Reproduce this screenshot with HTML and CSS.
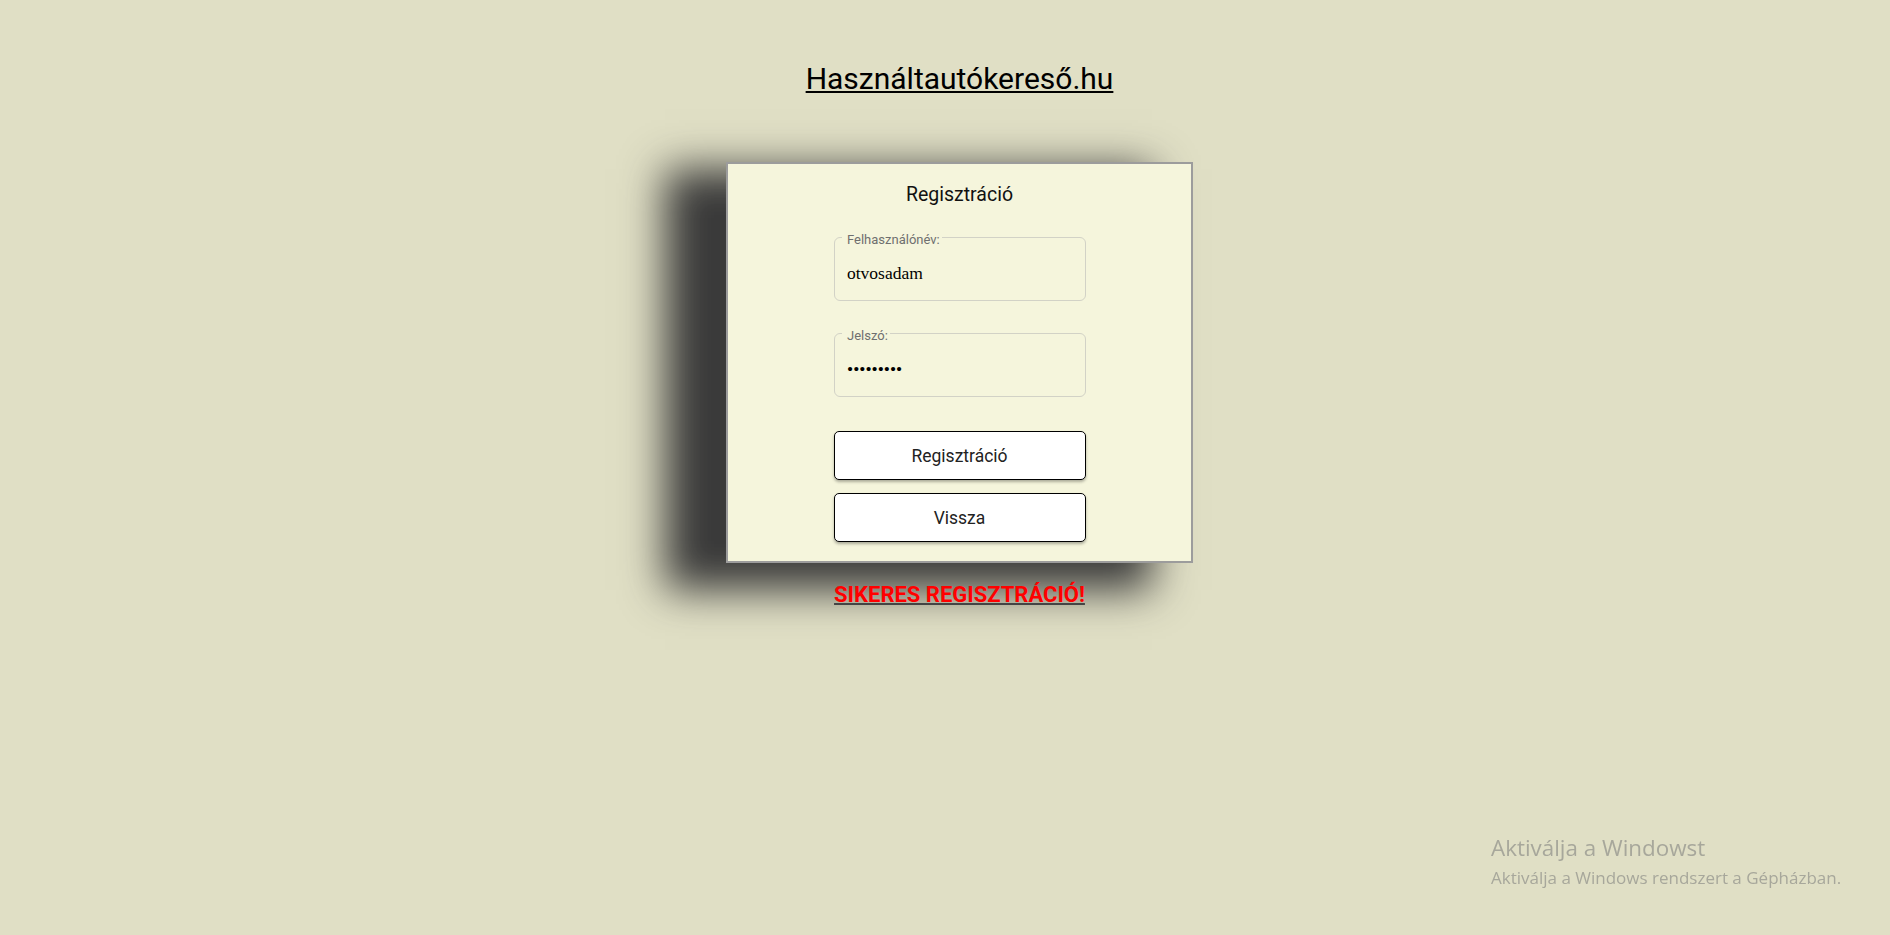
FILE: index.html
```html
<!DOCTYPE html>
<html lang="hu">
<head>
<meta charset="utf-8">
<title>Regisztráció - Használtautókereső.hu</title>
<link rel="stylesheet" href="styles.css">
</head>
<body>
<div class="page">
  <header class="site-header">
    <a class="brand" href="#">Használtautókereső.hu</a>
  </header>
  <main class="card">
    <h2 class="card-title">Regisztráció</h2>
    <form class="form">
      <fieldset class="field">
        <legend>Felhasználónév:</legend>
        <input type="text" value="otvosadam">
      </fieldset>
      <fieldset class="field">
        <legend>Jelszó:</legend>
        <input type="password" value="123456789">
      </fieldset>
      <div class="actions">
        <button class="btn" type="button">Regisztráció</button>
        <button class="btn" type="button">Vissza</button>
      </div>
    </form>
  </main>
  <p class="status"><a class="status-link" href="#">SIKERES REGISZTRÁCIÓ!</a></p>
</div>
<div class="watermark">
  <div class="wm-title">Aktiválja a Windowst</div>
  <div class="wm-sub">Aktiválja a Windows rendszert a Gépházban.</div>
</div>
</body>
</html>
```

FILE: styles.css
```css
html, body {
  margin: 0;
  padding: 0;
  background: #e0dfc5;
}

body {
  font-family: Roboto, "Liberation Sans", sans-serif;
  min-height: 100vh;
}

.page {
  display: flex;
  flex-direction: column;
  align-items: center;
  padding-left: 29px;
  padding-top: 61px;
}

.site-header {
  font-size: 30px;
  line-height: 35px;
  height: 35px;
}

.brand {
  color: #000;
  text-decoration: underline;
  text-decoration-thickness: 2px;
  text-underline-offset: 2px;
}

.card {
  margin-top: 66px;
  width: 463px;
  padding: 19px 0;
  border: 2px solid #9c9c9c;
  background: #f5f5dc;
  box-shadow: -51px 17px 40px 10px #3a3a3a;
  display: flex;
  flex-direction: column;
  align-items: center;
}

.card-title {
  margin: 0;
  font-size: 19.5px;
  line-height: 24px;
  font-weight: 400;
  color: #111;
}

.form {
  margin-top: 20px;
  width: 252px;
  display: flex;
  flex-direction: column;
}

.field {
  margin: 0;
  padding: 11px 7px 12px;
  border: 1px solid #d2d2c6;
  border-radius: 6px;
  min-width: 0;
}

.field + .field {
  margin-top: 22px;
}

.field legend {
  padding: 6px 2px 0 5.5px;
  font-family: Roboto, "Liberation Sans", sans-serif;
  font-size: 13px;
  line-height: 14px;
  color: #6f6f6f;
}

.field input {
  display: block;
  width: 100%;
  box-sizing: border-box;
  height: 30px;
  padding: 0 5.5px;
  border: 0;
  background: transparent;
  outline: none;
  font-family: "Liberation Serif", serif;
  font-size: 17.5px;
  color: #000;
}

.actions {
  margin-top: 34px;
  display: flex;
  flex-direction: column;
  gap: 13px;
}

.btn {
  height: 49px;
  border: 1px solid #000;
  border-radius: 5px;
  background: #fff;
  box-shadow: 0 2px 3px rgba(0, 0, 0, 0.3);
  font-family: Roboto, "Liberation Sans", sans-serif;
  font-size: 17.5px;
  color: #222;
  cursor: pointer;
}

.status {
  margin: 18px 0 0;
  font-size: 22px;
  line-height: 27px;
  font-weight: 700;
}

.status-link {
  color: #ff0000;
  text-decoration: underline;
  text-decoration-color: #444;
  text-decoration-thickness: 2px;
}

.watermark {
  position: fixed;
  left: 1491px;
  top: 830px;
  color: #a7a79b;
  font-family: "Open Sans", "Noto Sans", sans-serif;
  pointer-events: none;
}

.wm-title {
  font-size: 22.4px;
  line-height: 36px;
}

.wm-sub {
  font-size: 17px;
  line-height: 24px;
}
```
